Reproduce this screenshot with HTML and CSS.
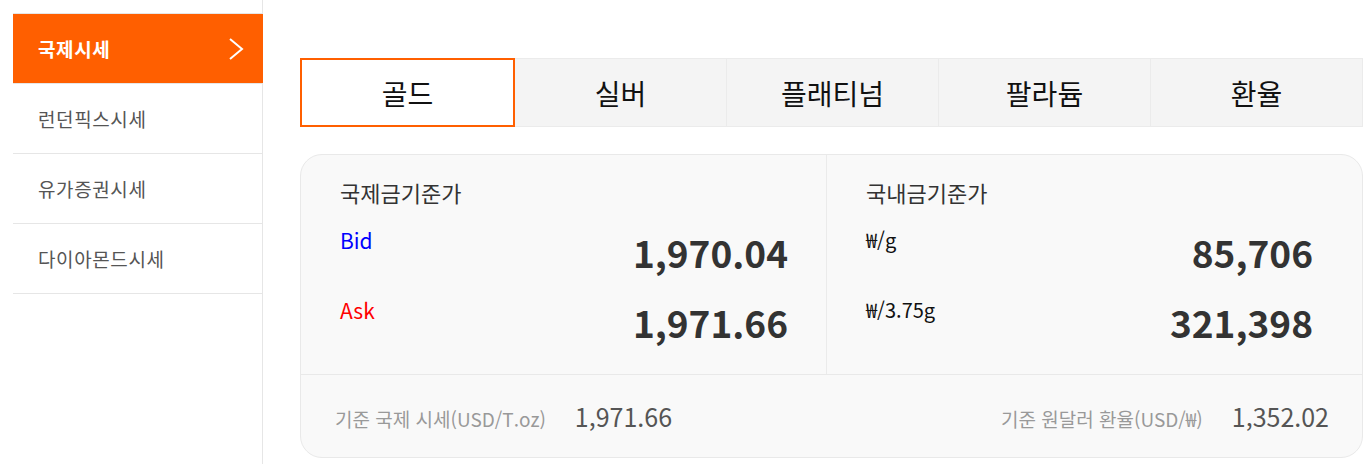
FILE: index.html
```html
<!DOCTYPE html>
<html lang="ko">
<head>
    <meta charset="UTF-8">
    <meta name="viewport" content="width=device-width, initial-scale=1.0">
    <title>국제시세</title>
    <link rel="stylesheet" href="styles.css">
</head>
<body>
    <div id="page">
        <!-- 좌측 메뉴 -->
        <div id="side">
            <ul class="menu">
                <li class="menu-item active">
                    <span>국제시세</span>
                    <svg class="chevron" width="16" height="22" viewBox="0 0 16 22"><polyline points="2,1 14,11 2,21" fill="none" stroke="#fff" stroke-width="2"/></svg>
                </li>
                <li class="menu-item"><span>런던픽스시세</span></li>
                <li class="menu-item"><span>유가증권시세</span></li>
                <li class="menu-item"><span>다이아몬드시세</span></li>
            </ul>
        </div>

        <div id="main">
            <div class="tabs">
                <div class="tab active">골드</div>
                <div class="tab">실버</div>
                <div class="tab">플래티넘</div>
                <div class="tab">팔라듐</div>
                <div class="tab">환율</div>
            </div>

            <div class="price-card">
                <div class="panes">
                    <div class="pane pane-left">
                        <p class="pane-title">국제금기준가</p>
                        <div class="price-row">
                            <span class="label bid">Bid</span>
                            <span class="value">1,970.04</span>
                        </div>
                        <div class="price-row">
                            <span class="label ask">Ask</span>
                            <span class="value">1,971.66</span>
                        </div>
                    </div>
                    <div class="pane pane-right">
                        <p class="pane-title">국내금기준가</p>
                        <div class="price-row">
                            <span class="label unit">₩/g</span>
                            <span class="value">85,706</span>
                        </div>
                        <div class="price-row">
                            <span class="label unit">₩/3.75g</span>
                            <span class="value">321,398</span>
                        </div>
                    </div>
                </div>
                <div class="card-foot">
                    <div class="foot-item">
                        <span class="foot-label">기준 국제 시세(USD/T.oz)</span>
                        <span class="foot-value">1,971.66</span>
                    </div>
                    <div class="foot-item">
                        <span class="foot-label">기준 원달러 환율(USD/₩)</span>
                        <span class="foot-value">1,352.02</span>
                    </div>
                </div>
            </div>
        </div>
    </div>
</body>
</html>
```

FILE: styles.css
```css
body {
    margin: 0;
    font-family: "Noto Sans CJK KR", "Noto Sans", sans-serif;
    color: #333;
    background: #fff;
    overflow: hidden;
}
#page {
    display: flex;
    min-height: 464px;
}
#side {
    width: 262px;
    flex-shrink: 0;
    border-right: 1px solid #e6e6e6;
}
.menu {
    list-style: none;
    margin: 13px 0 0 13px;
    padding: 0;
    width: 250px;
    border-top: 1px solid #e6e6e6;
}
.menu-item {
    display: flex;
    align-items: center;
    justify-content: space-between;
    height: 69px;
    padding: 0 19px 0 25px;
    border-bottom: 1px solid #e6e6e6;
    font-size: 19px;
    letter-spacing: 0.6px;
    color: #555;
}
.menu-item.active {
    background-color: #ff5f00;
    color: #fff;
    font-weight: 700;
}
.chevron {
    display: block;
}
#main {
    flex: 1;
    padding: 58px 6px 0 37px;
}
.tabs {
    display: flex;
}
.tab {
    flex: 1;
    height: 69px;
    box-sizing: border-box;
    display: flex;
    align-items: center;
    justify-content: center;
    background: #f4f4f4;
    border: 1px solid #ebebeb;
    border-left: none;
    font-size: 28px;
    color: #111;
}
.tab.active {
    background: #fff;
    border: 2px solid #ff5f00;
}
.price-card {
    margin-top: 27px;
    background: #f9f9f9;
    border: 1px solid #e9e9e9;
    border-radius: 22px;
}
.panes {
    display: grid;
    grid-template-columns: 526px 1fr;
    height: 219px;
    border-bottom: 1px solid #e9e9e9;
}
.pane {
    padding: 22px 38px 0 39px;
}
.pane-left {
    border-right: 1px solid #ebebeb;
}
.pane-right {
    padding: 22px 49px 0 39px;
}
.pane-title {
    margin: 0 0 18px;
    font-size: 22px;
    line-height: 30px;
    color: #333;
}
.price-row {
    display: flex;
    justify-content: space-between;
    align-items: flex-start;
    height: 70px;
}
.label {
    font-size: 21px;
    line-height: 30px;
}
.bid {
    color: #0000ff;
}
.ask {
    color: #ff0000;
}
.unit {
    color: #111;
    font-size: 20px;
}
.value {
    margin-top: 3px;
    font-size: 37px;
    line-height: 48px;
    font-weight: 700;
    color: #333;
}
.card-foot {
    display: flex;
    justify-content: space-between;
    align-items: center;
    height: 82px;
    padding: 0 33px 0 34px;
}
.foot-item {
    display: flex;
    align-items: baseline;
    gap: 29px;
}
.foot-label {
    font-size: 19px;
    color: #999;
}
.foot-value {
    font-size: 25px;
    color: #555;
}
```
